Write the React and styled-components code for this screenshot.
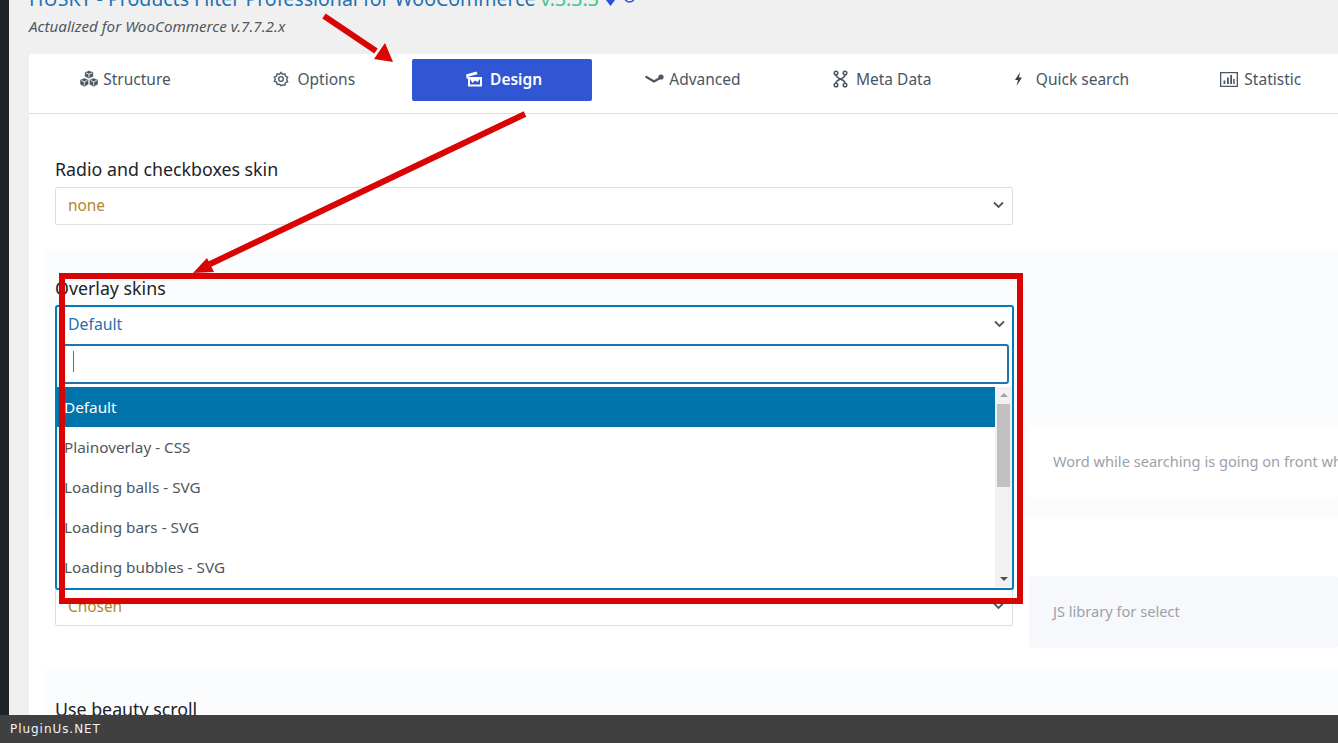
import React from "react";
import styled, { createGlobalStyle } from "styled-components";

const Global = createGlobalStyle`
  html, body { margin: 0; padding: 0; height: 100%; overflow: hidden; background: #f0f0f1; }
  body { font-family: "Noto Sans", "Open Sans", sans-serif; }
`;
const Page = styled.div`position: relative; display: flex; height: 743px; width: 1338px; overflow: hidden; background: #f0f0f1;`;
const Sidebar = styled.div`width: 9px; flex: none; background: #1d2327;`;
const Main = styled.main`flex: 1; min-width: 0; padding-left: 20px; display: flex; flex-direction: column;`;
const Title = styled.h1`margin: -15px 0 0; font-size: 19.5px; line-height: 27px; font-weight: 400; color: #2271b1; white-space: nowrap; display: flex; align-items: center; gap: 6px;`;
const Version = styled.span`color: #3ec98a;`;
const Sub = styled.div`margin-top: 4px; height: 22px; font-size: 15.2px; line-height: 20px; font-style: italic; color: #50575e;`;
const Panel = styled.section`margin-top: 16px; background: #fff; flex: 1; min-height: 0; border-radius: 3px 0 0 0; overflow: hidden;`;
const Tabs = styled.nav`display: flex; gap: 9.3px; height: 54px; padding: 5px 0 0 6px; box-sizing: content-box; border-bottom: 1px solid #e0e0e0;`;
const Tab = styled.a`width: 180px; height: 42px; flex: none; box-sizing: border-box; padding: 0 0 2px ${p => p.$active ? 4 : 0}px; border-radius: 2px; display: flex; align-items: center; justify-content: center; gap: ${p => p.$gap || 6}px; font-size: 15.5px; font-weight: ${p => p.$active ? 600 : 400}; color: ${p => p.$active ? "#fff" : "#4b5563"}; background: ${p => p.$active ? "#3056d3" : "transparent"}; margin: ${p => p.$active ? "0 2px 0 -2px" : "0"};`;
const Row = styled.div`background: ${p => p.$tint ? "#fbfcfe" : "#fff"}; margin-left: ${p => p.$tint ? 16 : 0}px; height: ${p => p.$h}px; padding-left: ${p => p.$tint ? 10 : 26}px; padding-top: ${p => p.$pt}px; box-sizing: border-box; display: flex; gap: 16px;`;
const Field = styled.div`width: 958px; flex: none;`;
const Label = styled.div`font-size: 17.8px; line-height: 22px; color: #1d2327; margin-bottom: 7px;`;
const Select = styled.div`height: 38px; margin-top: ${p => p.$mt || 0}px; box-sizing: border-box; border: 1px solid #dcdfe3; border-radius: 2px; background: #fff; display: flex; align-items: center; justify-content: space-between; padding: 0 8px 2px 12px; font-size: 15.4px; color: #b5862c;`;
const Note = styled.div`flex: 1; min-width: 0; height: 72px; box-sizing: border-box; padding: 0 0 2px 24px; background: ${p => p.$tint ? "#f7f8fb" : "#fff"}; border-radius: 3px; display: flex; align-items: center; font-size: 14.6px; color: #9ba1a9; white-space: nowrap; overflow: hidden;`;
const Dropdown = styled.div`position: absolute; left: 55px; top: 305px; width: 959px; height: 285px; box-sizing: border-box; border: 2px solid #007cba; border-radius: 3px; background: #fff; z-index: 2;`;
const Current = styled.div`height: 37px; box-sizing: border-box; padding: 0 7px 4px 11px; display: flex; align-items: center; justify-content: space-between; font-size: 15.8px; color: #2271b1;`;
const Search = styled.div`margin-left: 6px; width: 946px; height: 40px; box-sizing: border-box; border: 2px solid #2271b1; border-radius: 3px; padding: 5px 8px;`;
const Caret = styled.div`width: 1px; height: 21px; background: #8a6d2f;`;
const ListWrap = styled.div`display: flex; margin-top: 3px; height: 200px;`;
const List = styled.div`flex: 1;`;
const Item = styled.div`height: 40px; display: flex; align-items: center; padding-left: 7px; font-size: 15.3px; color: ${p => p.$on ? "#fff" : "#50575e"}; background: ${p => p.$on ? "#0073aa" : "transparent"};`;
const Scroll = styled.div`width: 17px; flex: none; background: #f1f1f1; position: relative; display: flex; flex-direction: column; align-items: center;`;
const Thumb = styled.div`position: absolute; left: 2px; top: 17px; width: 13px; height: 83px; background: #c1c1c1;`;
const ArrowUp = styled.div`position: absolute; top: 6px; left: 5px; border: 4px solid transparent; border-top: 0; border-bottom: 4px solid #a3a3a3;`;
const ArrowDown = styled.div`position: absolute; bottom: 6px; left: 5px; border: 4px solid transparent; border-bottom: 0; border-top: 4px solid #505050;`;
const Footer = styled.footer`position: absolute; left: 0; right: 0; bottom: 0; height: 28px; background: #404040; color: #f2f2f2; font-family: "DejaVu Sans", sans-serif; font-size: 12px; letter-spacing: 0.95px; line-height: 28px; padding-left: 10px; z-index: 5;`;
const RedFrame = styled.div`position: absolute; left: 59px; top: 273px; width: 964px; height: 331px; box-sizing: border-box; border: 6px solid #d90404; z-index: 3;`;
const Overlay = styled.svg`position: absolute; left: 0; top: 0; z-index: 4; pointer-events: none;`;
const Badges = styled.span`display: inline-flex; align-items: flex-start; gap: 8px; margin-left: 1px; align-self: flex-end; height: 6px; margin-bottom: 6px;`;

const Chevron = () => (
  <svg width="11" height="8" viewBox="0 0 11 8" fill="none" stroke="#50575e" strokeWidth="1.800"><path d="M1 1.500l4.500 4.500 4.500-4.500" /></svg>
);
const Cubes = () => (
  <svg width="20" height="18" viewBox="0 0 20 18">
    <g fill="#4b5563" stroke="#fff" strokeWidth="0.500">
      <path d="M10 .5l4.300 1.800v4.400L10 8.500 5.700 6.700V2.300z" />
      <path d="M5.300 8l4.300 1.800v4.700l-4.300 2.200L1 14.500V9.800z" />
      <path d="M14.700 8l4.300 1.800v4.700l-4.300 2.200-4.300-2.200V9.800z" />
    </g>
    <g fill="none" stroke="#fff" strokeWidth="0.900">
      <path d="M7 3l3 1.300L13 3M10 4.300v3M2.300 10.500l3 1.300 3-1.300M5.300 11.800v3.500M11.700 10.500l3 1.300 3-1.300M14.700 11.800v3.500" />
    </g>
  </svg>
);
const Gear = () => (
  <svg width="16" height="16" viewBox="0 0 24 24" fill="none" stroke="#4b5563" strokeWidth="2"><circle cx="12" cy="12" r="3.500" /><path d="M12 2l2.200 3 3.600-.9.900 3.600 3.300 1.800-1.500 3.400 1.500 3.400-3.300 1.300-.9 3.600-3.600-.4L12 22l-2.200-2.200-3.600.4-.9-3.600-3.300-1.300 1.500-3.400L2 9.500l3.300-1.800.9-3.600 3.600.9z" /></svg>
);
const Design = () => (
  <svg width="18" height="16" viewBox="0 0 18 16" fill="#fff"><path d="M1 3.500L11.500 .5l1 2.700L3.500 5.500v2L1.800 8z" /><path d="M3 6h14v9.500H3zm2 2v5.500h10V8l-2.500 3-2.500-1.500L7.500 12z" fillRule="evenodd" /></svg>
);
const Swoosh = () => (
  <svg width="19" height="10" viewBox="0 0 19 10"><path d="M.5 2.500L9 7.500 15 4" fill="none" stroke="#4b5563" strokeWidth="2.200" /><circle cx="16" cy="3" r="2.600" fill="#4b5563" /></svg>
);
const Nodes = () => (
  <svg width="15" height="18" viewBox="0 0 15 18" fill="none" stroke="#4b5563" strokeWidth="1.500"><circle cx="3" cy="3" r="1.800" /><circle cx="12" cy="3" r="1.800" /><circle cx="3" cy="15" r="1.800" /><circle cx="12" cy="15" r="1.800" /><path d="M3 5c0 4 9 4 9 8M12 5c0 4-9 4-9 8" /></svg>
);
const Bolt = () => (
  <svg width="9" height="14" viewBox="0 0 9 14" fill="#374151"><path d="M6 0L1 8h3l-1.500 6L8 5.500H5z" /></svg>
);
const Stat = () => (
  <svg width="18" height="15" viewBox="0 0 18 15" fill="#4b5563"><path d="M0 0h18v15H0zm1.300 1.300v12.400h15.400V1.300z" fillRule="evenodd" /><path d="M3.500 8.500h1.800v3.500H3.500zM7 5.500h1.800V12H7zM10.200 3h1.800v9h-1.800z" /><path d="M13.200 7h1.500v5h-1.500z" /></svg>
);
const Gem = () => (
  <svg width="9" height="6" viewBox="0 0 9 6" fill="#2b50d8"><path d="M0 0h9L4.500 6z" /></svg>
);
const Ring = () => (
  <svg width="13" height="3" viewBox="0 0 13 3" fill="none" stroke="#2b50d8" strokeWidth="1.500"><circle cx="6.500" cy="-3" r="5" /></svg>
);

const tabs = [
  { label: "Structure", icon: <Cubes />, gap: 4 },
  { label: "Options", icon: <Gear />, gap: 8 },
  { label: "Design", icon: <Design />, active: true, gap: 7 },
  { label: "Advanced", icon: <Swoosh />, gap: 5 },
  { label: "Meta Data", icon: <Nodes />, gap: 8 },
  { label: "Quick search", icon: <Bolt />, gap: 13 },
  { label: "Statistic", icon: <Stat />, gap: 6 },
];
const options = ["Plainoverlay - CSS", "Loading balls - SVG", "Loading bars - SVG", "Loading bubbles - SVG"];

export default function App() {
  return (
    <Page>
      <Global />
      <Sidebar />
      <Main>
        <Title>
          <span>HUSKY - Products Filter Professional for WooCommerce <Version>v.3.3.3</Version></span>
          <Badges><Gem /><Ring /></Badges>
        </Title>
        <Sub>Actualized for WooCommerce v.7.7.2.x</Sub>
        <Panel>
          <Tabs>
            {tabs.map(t => (
              <Tab key={t.label} $active={t.active} $gap={t.gap}>{t.icon}{t.label}</Tab>
            ))}
          </Tabs>
          <Row $h={136} $pt={44}>
            <Field>
              <Label>Radio and checkboxes skin</Label>
              <Select>none<Chevron /></Select>
            </Field>
          </Row>
          <Row $tint $h={117} $pt={27}>
            <Field><Label>Overlay skins</Label></Field>
          </Row>
          <Row $tint $h={151} $pt={59}>
            <Field />
            <Note>Word while searching is going on front when user is waiting for results</Note>
          </Row>
          <Row $h={151} $pt={58}>
            <Field>
              <Select $mt={12}>Chosen<Chevron /></Select>
            </Field>
            <Note $tint>JS library for select</Note>
          </Row>
          <Row $tint $h={120} $pt={29}>
            <Field><Label>Use beauty scroll</Label></Field>
          </Row>
        </Panel>
      </Main>
      <Dropdown>
        <Current>Default<Chevron /></Current>
        <Search><Caret /></Search>
        <ListWrap>
          <List>
            <Item $on>Default</Item>
            {options.map(o => <Item key={o}>{o}</Item>)}
          </List>
          <Scroll>
            <ArrowUp />
            <Thumb />
            <ArrowDown />
          </Scroll>
        </ListWrap>
      </Dropdown>
      <RedFrame />
      <Overlay width="1338" height="743" viewBox="0 0 1338 743">
        <path d="M324 16L376 51" stroke="#d90404" strokeWidth="6" />
        <path d="M393 62L374 59 385 43z" fill="#d90404" />
        <path d="M525 114L208 265" stroke="#d90404" strokeWidth="6" />
        <path d="M193 273L214 272 207 258z" fill="#d90404" />
      </Overlay>
      <Footer>PluginUs.NET</Footer>
    </Page>
  );
}
